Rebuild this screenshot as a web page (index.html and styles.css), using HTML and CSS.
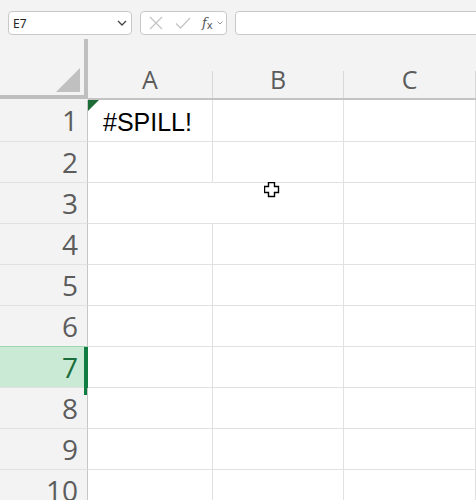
FILE: index.html
```html
<!DOCTYPE html>
<html>
<head>
<meta charset="utf-8">
<link rel="stylesheet" href="styles.css">
</head>
<body>
<div class="toolbar">
  <div class="namebox">
    <span class="ref">E7</span>
    <svg class="chev" width="10" height="6" viewBox="0 0 10 6"><path d="M1 1 L5 5 L9 1" fill="none" stroke="#444" stroke-width="1.3"/></svg>
  </div>
  <div class="fxbox">
    <svg class="ico" width="16" height="16" viewBox="0 0 16 16"><path d="M2 2 L14 14 M14 2 L2 14" stroke="#c4c4c4" stroke-width="1.3" fill="none"/></svg>
    <svg class="ico" width="16" height="16" viewBox="0 0 16 16"><path d="M1 8.5 L5.5 13 L15 3" stroke="#c4c4c4" stroke-width="1.3" fill="none"/></svg>
    <span class="fx"><i>f</i><sub>x</sub></span>
    <svg class="chev2" width="6" height="4" viewBox="0 0 6 4"><path d="M0.5 0.5 L3 3 L5.5 0.5" fill="none" stroke="#999" stroke-width="1"/></svg>
  </div>
  <div class="formula"></div>
</div>
<div class="sheet">
  <div class="corner"><div class="tri"></div></div>
  <div class="colhead"><div class="lbl">A</div></div>
  <div class="colhead"><div class="lbl">B</div></div>
  <div class="colhead last"><div class="lbl">C</div></div>

  <div class="rowhead">1</div>
  <div class="cell a1">#SPILL!</div>
  <div class="cell"></div>
  <div class="cell"></div>

  <div class="rowhead">2</div>
  <div class="cell"></div>
  <div class="cell"></div>
  <div class="cell"></div>

  <div class="rowhead">3</div>
  <div class="cell span2"></div>
  <div class="cell"></div>

  <div class="rowhead">4</div>
  <div class="cell"></div>
  <div class="cell"></div>
  <div class="cell"></div>

  <div class="rowhead">5</div>
  <div class="cell"></div>
  <div class="cell"></div>
  <div class="cell"></div>

  <div class="rowhead">6</div>
  <div class="cell"></div>
  <div class="cell"></div>
  <div class="cell"></div>

  <div class="rowhead sel">7</div>
  <div class="cell"></div>
  <div class="cell"></div>
  <div class="cell"></div>

  <div class="rowhead">8</div>
  <div class="cell"></div>
  <div class="cell"></div>
  <div class="cell"></div>

  <div class="rowhead">9</div>
  <div class="cell"></div>
  <div class="cell"></div>
  <div class="cell"></div>

  <div class="rowhead">10</div>
  <div class="cell"></div>
  <div class="cell"></div>
  <div class="cell"></div>
</div>
<svg class="cursor" width="16" height="16" viewBox="0 0 16 16"><path d="M4.5 0.5 H10.5 V4.5 H14.5 V10.5 H10.5 V14.5 H4.5 V10.5 H0.5 V4.5 H4.5 Z" fill="#fff" stroke="#000" stroke-width="1.4"/></svg>
</body>
</html>
```
FILE: styles.css
```css
html, body {
  margin: 0;
  padding: 0;
  background: #f3f3f3;
  width: 476px;
  height: 500px;
  overflow: hidden;
  font-family: "Open Sans", "Noto Sans", sans-serif;
}
.toolbar {
  height: 40px;
  display: flex;
  align-items: flex-start;
  gap: 8px;
  padding-left: 8px;
  padding-top: 11px;
  box-sizing: border-box;
}
.namebox, .fxbox, .formula {
  flex: none;
  height: 24px;
  box-sizing: border-box;
  border: 1px solid #c9c9c9;
  border-radius: 4px;
  background: #fff;
  display: flex;
  align-items: center;
}
.namebox {
  width: 124px;
  padding: 0 4px 0 4px;
  justify-content: space-between;
}
.ref {
  font-family: "Noto Sans", sans-serif;
  font-size: 12px;
  color: #222;
}
.fxbox {
  width: 87px;
  padding-left: 7px;
  gap: 11px;
}
.ico { flex: none; }
.fx {
  font-family: "DejaVu Serif", serif;
  font-size: 13px;
  color: #555;
  line-height: 1;
}
.fx sub { font-size: 10px; font-style: normal; vertical-align: -2px; font-family: "DejaVu Sans", sans-serif; }
.chev2 { margin-left: -7px; }
.formula {
  width: 260px;
}
.sheet {
  display: grid;
  grid-template-columns: 88px 125px 131px 132px;
  grid-template-rows: 60px 42px repeat(9, 41px);
}
.corner {
  position: relative;
  box-sizing: border-box;
  border-right: 4px solid #bfbfbf;
  border-bottom: 4px solid #bfbfbf;
  margin-top: -1px;
  height: 60px;
  width: 88px;
}
.tri {
  position: absolute;
  left: 56px;
  top: 29px;
  width: 0;
  height: 0;
  border-left: 24px solid transparent;
  border-bottom: 24px solid #c0c0c0;
}
.colhead {
  padding-top: 31px;
  border-bottom: 2px solid #c3c3c3;
  box-sizing: border-box;
}
.lbl {
  box-sizing: border-box;
  height: 27px;
  border-right: 1px solid #d9d9d9;
  display: flex;
  justify-content: center;
  align-items: center;
  font-size: 25px;
  color: #5c5c5c;
  line-height: 20px;
  padding-bottom: 11px;
}
.rowhead {
  position: relative;
  box-sizing: border-box;
  border-right: 1px solid #c6c6c6;
  border-bottom: 1px solid #e1e1e1;
  text-align: right;
  padding-right: 9px;
  font-size: 28px;
  line-height: 40px;
  color: #5c5c5c;
}
.rowhead.sel {
  background: #caead6;
  color: #1b6e3c;
  border-top: 1px solid #9fd5b3;
  margin-top: -1px;
}
.rowhead.sel::after {
  content: "";
  position: absolute;
  right: -1px;
  top: 0;
  width: 4px;
  height: 48px;
  background: #107c41;
}
.cell {
  position: relative;
  background: #fff;
  box-sizing: border-box;
  border-right: 1px solid #e1e1e1;
  border-bottom: 1px solid #e1e1e1;
}
.span2 { grid-column: span 2; }
.a1 {
  font-family: "Liberation Sans", Arial, sans-serif;
  font-size: 25px;
  color: #000;
  padding-left: 15px;
  line-height: 44px;
}
.a1::before {
  content: "";
  position: absolute;
  left: 0;
  top: 0;
  width: 0;
  height: 0;
  border-top: 11px solid #1d6b36;
  border-right: 11px solid transparent;
}
.cursor {
  position: absolute;
  left: 264px;
  top: 182px;
}
```
